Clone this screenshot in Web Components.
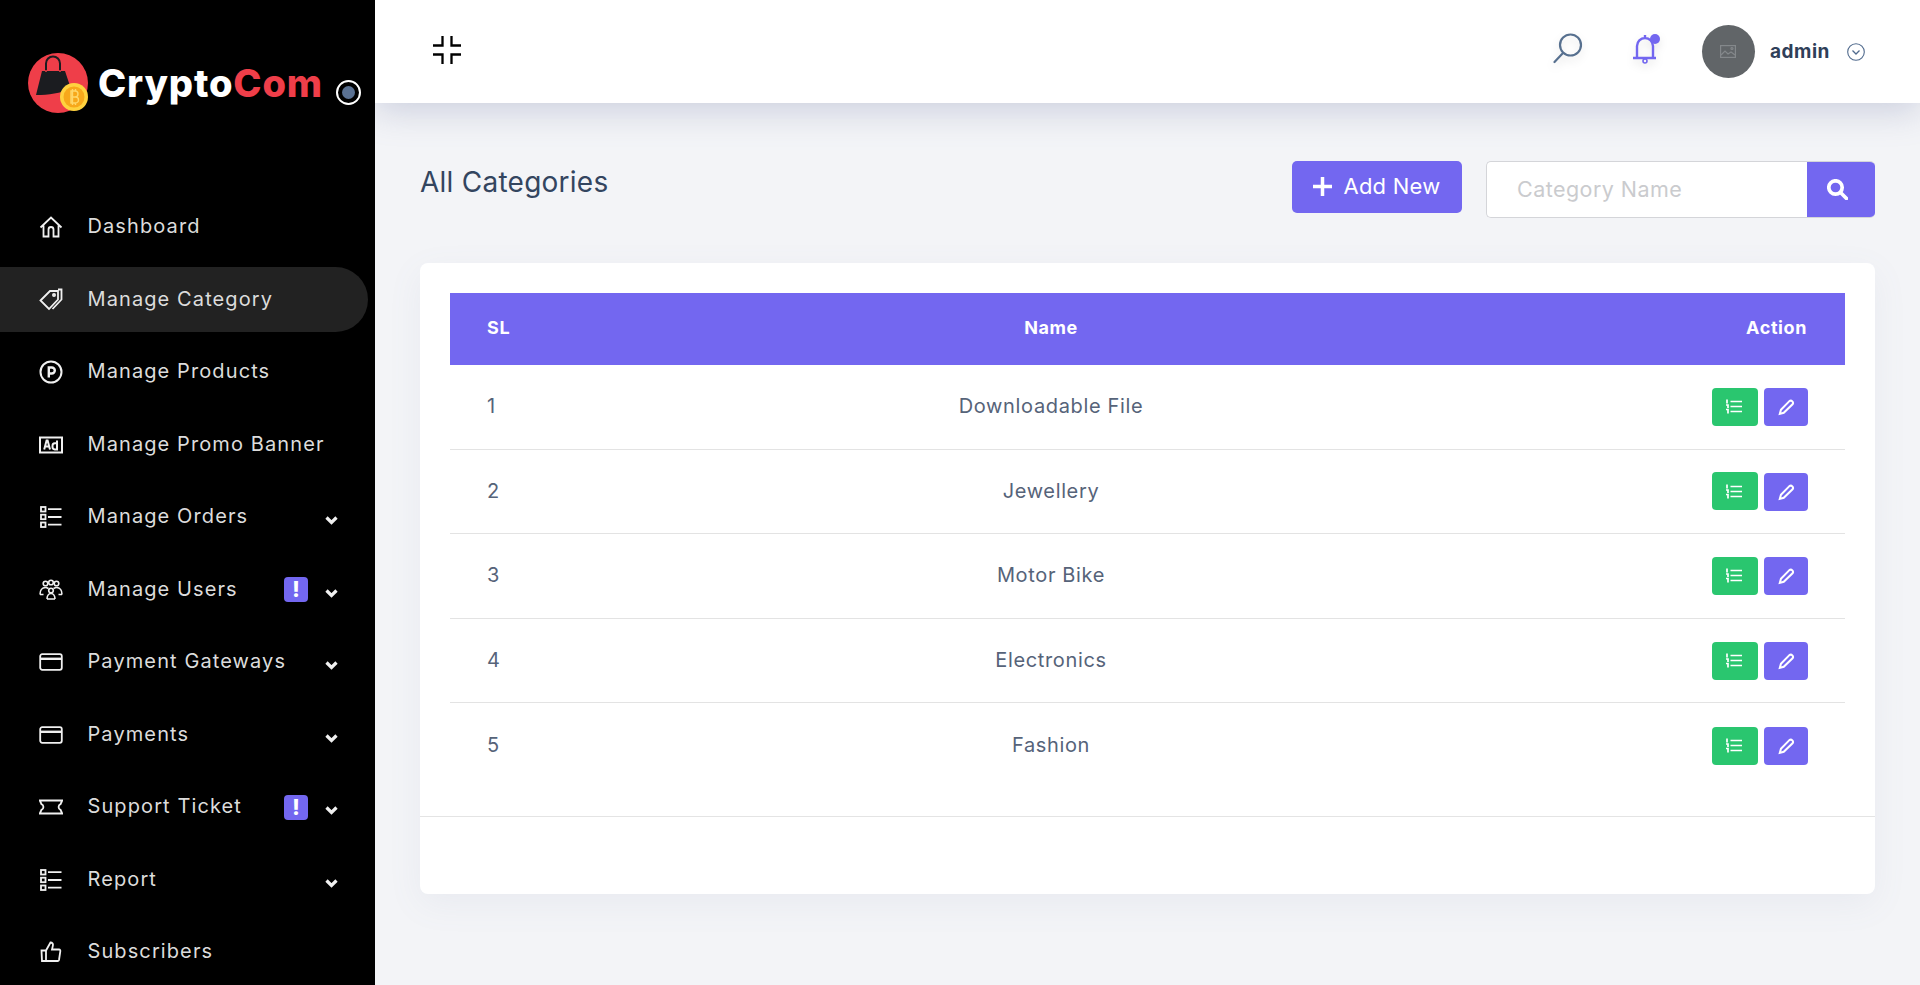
<!DOCTYPE html>
<html lang="en"><head><meta charset="utf-8"><title>All Categories</title>
<style>
html,body{margin:0;height:985px;overflow:hidden;background:#f3f4f7;font-family:Inter,"Liberation Sans",sans-serif}
</style></head>
<body>
<app-shell>
  <side-bar slot="side">
    <nav-item icon="home" label="Dashboard"></nav-item>
    <nav-item icon="tag" label="Manage Category" active></nav-item>
    <nav-item icon="product" label="Manage Products"></nav-item>
    <nav-item icon="ad" label="Manage Promo Banner"></nav-item>
    <nav-item icon="list" label="Manage Orders" more></nav-item>
    <nav-item icon="users" label="Manage Users" more alert></nav-item>
    <nav-item icon="card" label="Payment Gateways" more></nav-item>
    <nav-item icon="card" label="Payments" more></nav-item>
    <nav-item icon="ticket" label="Support Ticket" more alert></nav-item>
    <nav-item icon="list" label="Report" more></nav-item>
    <nav-item icon="thumb" label="Subscribers"></nav-item>
  </side-bar>
  <top-bar slot="top"></top-bar>
  <page-head slot="main" heading="All Categories" placeholder="Category Name"></page-head>
  <data-card slot="main">
    <cat-row n="1" name="Downloadable File"></cat-row>
    <cat-row n="2" name="Jewellery"></cat-row>
    <cat-row n="3" name="Motor Bike"></cat-row>
    <cat-row n="4" name="Electronics"></cat-row>
    <cat-row n="5" name="Fashion"></cat-row>
  </data-card>
</app-shell>
<script>
const ICONS={
home:'<path d="M1.500 12.500 12 2.500l10.500 10M4.500 10.500V21.500h5v-7a2.500 2.500 0 0 1 5 0v7h5V10.500"/>',
tag:'<path d="M1.500 12.500 11 3h8v8.500l-9 9.500z"/><circle cx="15" cy="7" r="1.100"/><path d="M19 1.500h3.500v10l-9 9.500"/>',
product:'<circle cx="12" cy="12" r="10.500" stroke-width="2"/><path d="M9.800 17.500V7.500h3a3 3 0 0 1 0 6h-3" stroke-width="2.400"/>',
ad:'<rect x="1" y="4.500" width="22" height="15" stroke-width="2"/><path d="M5.200 16.500 7.600 7.500h1l2.400 9M6 13.500h4.200" stroke-width="2"/><path d="M18 7.500v9h-2.200a2.500 2.500 0 0 1-2.300-2.600v-1a2.500 2.500 0 0 1 2.300-2.600H18" stroke-width="2"/>',
list:'<rect x="2" y="2" width="4.500" height="4.500" stroke-width="1.800"/><rect x="2" y="9.700" width="4.500" height="4.500" stroke-width="1.800"/><rect x="2" y="17.500" width="4.500" height="4.500" stroke-width="1.800"/><path d="M9 4.200H22.500M9 12H22.500M9 19.700H22.500"/>',
users:'<g stroke-width="1.600"><circle cx="6.500" cy="5.500" r="2.300"/><circle cx="17.500" cy="5.500" r="2.300"/><circle cx="12" cy="4.500" r="2.300"/><circle cx="12" cy="12.500" r="2.300"/><path d="M1 16.500c0-4 2-7 5.500-7 1.500 0 2 .5 3 1M23 16.500c0-4-2-7-5.500-7-1.500 0-2 .5-3 1M8 21c0-3 1.500-5.500 4-5.500s4 2.500 4 5.500M1 16.500h3.500M19.500 16.500H23M8 21h8"/></g>',
card:'<rect x="1.200" y="4.200" width="21.600" height="15.600" rx="2"/><path d="M1.500 8.800h21" stroke-width="2.400"/>',
ticket:'<path d="M.8 5.500h22.400l-1.700 3.700a3 3 0 0 0 0 5.600l1.700 3.700H.8l1.700-3.700a3 3 0 0 0 0-5.600z"/>',
thumb:'<path d="M2.500 10.500h4.500v10.500H3zM7 10.500 11.500 2.500c1.800 0 2.800 1.300 2.400 3l-.9 4h7c1 0 1.500.8 1.300 1.800L20 20a1.500 1.500 0 0 1-1.500 1H7"/>'
};
function def(name,html){
  customElements.define(name,class extends HTMLElement{
    connectedCallback(){
      if(this.shadowRoot)return;
      const a=k=>this.getAttribute(k)??'';
      const r=this.attachShadow({mode:'open'});
      r.innerHTML=typeof html==='function'?html(a,this):html;
    }
  });
}
def('app-shell',`<style>
:host{display:grid;grid-template-columns:375px 1fr;grid-template-rows:103px 1fr;width:1920px;height:985px;overflow:hidden;position:relative}
.s{grid-row:1/3;min-height:0;overflow:hidden;position:relative;z-index:3}
.t{position:relative;z-index:2}
.m{padding:58px 45px 0 45px;display:flex;flex-direction:column;gap:45px}
</style>
<div class="s"><slot name="side"></slot></div><div class="t"><slot name="top"></slot></div><div class="m"><slot name="main"></slot></div>`);

def('side-bar',`<style>
:host{display:flex;flex-direction:column;height:985px;background:#000;color:#dedede;box-sizing:border-box}
.logo{height:194.500px;flex:none;display:flex;align-items:flex-start;box-sizing:border-box;padding:53px 0 0 27px;position:relative}
svg{display:block;width:63px;height:63px;flex:none}
b{font:800 38px/1 Inter,"Liberation Sans",sans-serif;color:#fff;margin:11px 0 0 8px;letter-spacing:.85px;white-space:nowrap}
b i{font-style:normal;color:#ef3e49}
.dot{position:absolute;left:336px;top:80px;width:25px;height:25px;border:2px solid #fff;border-radius:50%;box-sizing:border-box;background:#000;display:grid;place-items:center}
.dot::after{content:"";width:13px;height:13px;border-radius:50%;background:#5a7192}
nav{display:flex;flex-direction:column;gap:7.500px}
</style>
<div class="logo">
<svg viewBox="0 0 63 63"><circle cx="31" cy="30" r="30" fill="#ef3e49"/>
<path d="M15 18H38L44 36C33 40 22 42 9 42z" fill="#1b1c20"/><path d="M19 18v-7.500a7 7 0 0 1 14 0V18" fill="none" stroke="#1b1c20" stroke-width="2"/>
<circle cx="19" cy="18" r="1" fill="#ef3e49"/><circle cx="33" cy="18" r="1" fill="#ef3e49"/>
<circle cx="47" cy="44" r="14" fill="#ffd23f"/><circle cx="47" cy="44" r="10.500" fill="#f7a81b"/>
<path d="M44 38h4a3 3 0 0 1 0 6h-4 4.500a3 3 0 0 1 0 6h-4.500zM45.500 36v16M48.500 36v2M48.500 50v2" fill="none" stroke="#ffd76a" stroke-width="1.400"/></svg>
<b>Crypto<i>Com</i></b><span class="dot"></span></div>
<nav><slot></slot></nav>`);

def('nav-item',(a,el)=>`<style>
:host{display:flex;align-items:center;height:65px;flex:none;box-sizing:border-box;padding-left:39px;width:368px;border-radius:0 33px 33px 0;position:relative;${el.hasAttribute('active')?'background:#222;':''}}
svg.i{width:24px;height:24px;flex:none;fill:none;stroke:#f0f0f0;stroke-width:1.800;stroke-linejoin:miter}
span{margin:0 0 1.500px 24.500px;font:400 20px/1 Inter,"Liberation Sans",sans-serif;letter-spacing:1.100px;color:#dcdcdc;white-space:nowrap;flex:1}
em{flex:none;width:24px;height:25px;border-radius:4px;background:#7367f0;color:#fff;display:grid;place-items:center;font:800 21px/1 Inter,sans-serif;font-style:normal;margin-right:17px}
svg.c{flex:none;width:13px;height:9px;margin:7px 30px 0 0;fill:none;stroke:#f0f0f0;stroke-width:3.200}
</style><svg class="i" viewBox="0 0 24 24">${ICONS[a('icon')]}</svg><span>${a('label')}</span>${el.hasAttribute('alert')?'<em>!</em>':''}${el.hasAttribute('more')?'<svg class="c" viewBox="0 0 13 9"><path d="M1.500 1.500 6.500 6.500 11.500 1.500"/></svg>':''}`);

def('top-bar',`<style>
:host{display:flex;align-items:center;height:103px;background:#fff;box-shadow:0 8px 34px rgba(120,130,170,.32);padding:0 55px 0 58px;box-sizing:border-box;color:#2f4059}
.col{width:28px;height:28px;display:block;margin-top:-3px;fill:none;stroke:#000;stroke-width:2.300}
.sp{flex:1}
.ser{width:30px;height:31px;margin-top:-6px;fill:none;stroke:#57708f;stroke-width:2.200;filter:drop-shadow(0 4px 4px rgba(0,0,0,.12))}
.bell{width:30px;height:31px;margin:-6px 0 0 49px;fill:none;stroke:#7367f0;stroke-width:2.400;filter:drop-shadow(0 4px 4px rgba(0,0,0,.1))}
.av{width:53px;height:53px;border-radius:50%;background:#616568;margin:-1px 0 0 40px;display:grid;place-items:center}
.av svg{width:16px;height:13px;fill:none;stroke:#84888b;stroke-width:1.200}
b{font:700 19px/1 Inter,"Liberation Sans",sans-serif;margin-left:15px;letter-spacing:.55px;color:#2f4059}
.ch{width:18px;height:18px;margin-left:17px;fill:none;stroke:#506a8d;stroke-width:1.100}
</style>
<svg class="col" viewBox="0 0 28 28"><path d="M9.500 0v9.500H0M18.500 0v9.500H28M9.500 28V18.500H0M18.500 28V18.500H28"/></svg>
<span class="sp"></span>
<svg class="ser" viewBox="0 0 30 31"><circle cx="17.500" cy="12" r="10.500"/><path d="M10 20 1.500 29" stroke-linecap="round"/></svg>
<svg class="bell" viewBox="0 0 30 31"><path d="M1 25h23M5 25V13a8 8 0 0 1 16 0v12M13 5V2"/><circle cx="13" cy="28" r="2" stroke-width="1.600"/><circle cx="23" cy="6" r="5" fill="#7367f0" stroke="none"/></svg>
<div class="av"><svg viewBox="0 0 16 13"><rect x=".6" y=".6" width="14.800" height="11.800"/><path d="M1 10 5 6l3 3 3-2 4 3"/><circle cx="12" cy="3.500" r="1"/></svg></div>
<b>admin</b>
<svg class="ch" viewBox="0 0 18 18"><circle cx="9" cy="9" r="8.300"/><path d="M5.500 7.500 9 11l3.500-3.500" stroke-width="1.300"/></svg>`);

def('page-head',a=>`<style>
:host{display:flex;align-items:flex-start;height:57px;flex:none;color:#33455f}
h1{margin:0;flex:1;font:400 28px/42px Inter,"Liberation Sans",sans-serif;letter-spacing:.25px;color:#33455f}
.add{height:52px;width:170px;border:0;border-radius:5px;background:#7367f0;color:#fff;font:400 22px/1 Inter,"Liberation Sans",sans-serif;letter-spacing:.25px;display:flex;align-items:center;justify-content:center;gap:11px;padding:0 0 2px}
.add svg{width:19px;height:19px;stroke:#fff;stroke-width:3.500;fill:none}
.box{margin-left:24px;width:389px;height:57px;display:flex;box-sizing:border-box;border:1px solid #d4d5d9;border-right:0;border-radius:5px;background:#fff;overflow:hidden}
input{flex:1;min-width:0;border:0;outline:0;background:transparent;padding:0 0 2px 30px;font:400 21.500px/1 Inter,"Liberation Sans",sans-serif;letter-spacing:.45px;color:#555}
input::placeholder{color:#cacbce;opacity:1}
.go{width:68px;background:#7367f0;display:grid;place-items:center;padding-right:7px;box-sizing:border-box}
.go svg{width:21px;height:21px;fill:none;stroke:#fff;stroke-width:3.700}
</style><h1>${a('heading')}</h1>
<button class="add"><svg viewBox="0 0 19 19"><path d="M9.500 0v19M0 9.500h19"/></svg>Add New</button>
<div class="box"><input placeholder="${a('placeholder')}" aria-label="${a('placeholder')}"><div class="go"><svg viewBox="0 0 21 21"><circle cx="8.500" cy="8.500" r="6.700"/><path d="m13.500 13.500 6 6" stroke-linecap="round"/></svg></div></div>`);

def('data-card',`<style>
:host{display:block;background:#fff;border-radius:8px;box-shadow:0 10px 34px rgba(120,130,170,.08);height:631px;box-sizing:border-box;padding:30px 30px 0 30px;position:relative}
.h{display:grid;grid-template-columns:203px 796px 1fr;align-items:center;height:72px;background:#7367f0;color:#fff;font:700 18px/1 Inter,"Liberation Sans",sans-serif;letter-spacing:.6px;padding-bottom:0}
.h span{margin-top:-2px}
.h span:first-child{padding-left:37px}.h span:nth-child(2){text-align:center}.h span:last-child{text-align:right;padding-right:38px}
.f{margin:28px -30px 0 -30px;border-top:1px solid #e4e4e4}
</style><div class="h"><span>SL</span><span>Name</span><span>Action</span></div><slot></slot><div class="f"></div>`);

def('cat-row',a=>`<style>
:host{display:grid;grid-template-columns:203px 796px 1fr;align-items:center;height:84.600px;box-sizing:border-box;border-bottom:1px solid #e3e3e3;font:400 20px/1 Inter,"Liberation Sans",sans-serif;letter-spacing:.65px;color:#566379}
:host(:last-child){border-bottom:0}
.n,.c{margin-bottom:1px}
.n{padding-left:37px}.c{text-align:center}
.a{display:flex;justify-content:flex-end;gap:6px;padding-right:37px;align-items:center}
.b{width:46px;height:38px;border-radius:4px;background:#2ac66f;display:grid;place-items:center}
.b svg{margin-left:-3px}
.p{width:44px;height:38px;background:#7367f0;margin-top:1px}
.p svg{margin-left:0}
svg{fill:none;stroke:#fff}
</style><span class="n">${a('n')}</span><span class="c">${a('name')}</span><span class="a">
<span class="b"><svg width="17" height="15" viewBox="0 0 17 15" stroke-width="1.700"><path d="M5.500 2.500h11.500M5.500 7.500h11.500M5.500 12.500h11.500M2 .5v4M1 6h2v3M1 10.500h2v4"/></svg></span>
<span class="b p"><svg width="18" height="18" viewBox="0 0 16 16" stroke-width="1.800"><path d="M3.500 10.500 11 2.800a2 2 0 0 1 2.800 2.800L6 13.200l-3.500.9z"/></svg></span></span>`);
</script>
</body></html>
